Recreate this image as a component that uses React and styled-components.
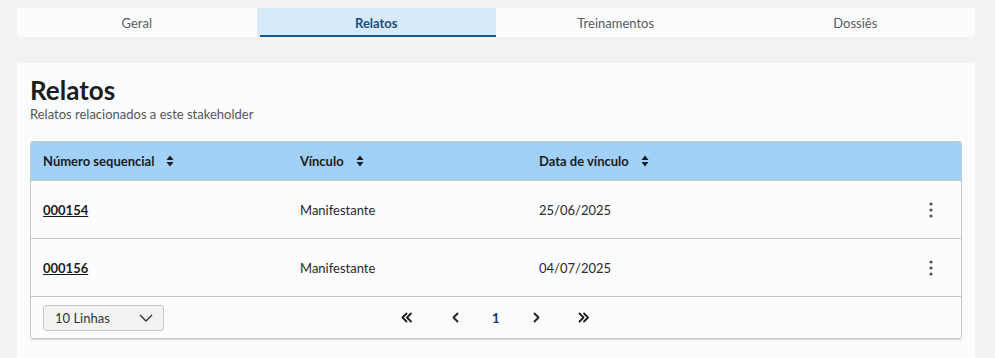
import React, { useState } from "react";
import styled, { createGlobalStyle } from "styled-components";

const relatos = [
    { numero: "000154", vinculo: "Manifestante", data: "25/06/2025" },
    { numero: "000156", vinculo: "Manifestante", data: "04/07/2025" },
];

const abas = ["Geral", "Relatos", "Treinamentos", "Dossiês"];

const SortIcon = () => (
    <svg width="8" height="12" viewBox="0 0 8 12">
        <path d="M4 0.5 L7.5 5 H0.5 Z" fill="#1c1c1c" />
        <path d="M4 11.5 L7.5 7 H0.5 Z" fill="#1c1c1c" />
    </svg>
);

const Kebab = () => (
    <svg width="4" height="16" viewBox="0 0 4 16">
        <circle cx="2" cy="2" r="1.6" fill="#555" />
        <circle cx="2" cy="8" r="1.6" fill="#555" />
        <circle cx="2" cy="14" r="1.6" fill="#555" />
    </svg>
);

const Chevron = ({ dir = "left", double }) => {
    const d = dir === "left" ? "M5.5 1.5 L1.5 5.5 L5.5 9.5" : "M1.5 1.5 L5.5 5.5 L1.5 9.5";
    const d2 = dir === "left" ? "M10 1.5 L6 5.5 L10 9.5" : "M6 1.5 L10 5.5 L6 9.5";
    return (
        <svg width={double ? 12 : 7} height="11" viewBox={double ? "0 0 12 11" : "0 0 7 11"}>
            <path d={d} fill="none" stroke="#1c1c1c" strokeWidth="1.8" strokeLinecap="round" strokeLinejoin="round" />
            {double && (
                <path d={d2} fill="none" stroke="#1c1c1c" strokeWidth="1.8" strokeLinecap="round" strokeLinejoin="round" />
            )}
        </svg>
    );
};

const App = () => {
    const [aba, setAba] = useState("Relatos");

    return (
        <>
            <Global />
            <Pagina>
                <Abas>
                    {abas.map((a) => (
                        <Aba key={a} $ativa={a === aba} onClick={() => setAba(a)}>
                            {a}
                        </Aba>
                    ))}
                </Abas>

                <Cartao>
                    <Titulo>Relatos</Titulo>
                    <Subtitulo>Relatos relacionados a este stakeholder</Subtitulo>

                    <Tabela>
                        <Cabecalho>
                            <Th>
                                Número sequencial <SortIcon />
                            </Th>
                            <Th>
                                Vínculo <SortIcon />
                            </Th>
                            <Th>
                                Data de vínculo <SortIcon />
                            </Th>
                            <Th />
                        </Cabecalho>
                        {relatos.map((r) => (
                            <Linha key={r.numero}>
                                <Numero href="#">{r.numero}</Numero>
                                <Td>{r.vinculo}</Td>
                                <Td>{r.data}</Td>
                                <Acoes>
                                    <Kebab />
                                </Acoes>
                            </Linha>
                        ))}
                        <Rodape>
                            <Seletor>
                                10 Linhas
                                <svg width="14" height="8" viewBox="0 0 14 8">
                                    <path d="M1 1 L7 7 L13 1" fill="none" stroke="#333" strokeWidth="1.4" />
                                </svg>
                            </Seletor>
                            <Paginacao>
                                <BotaoPag $largura={51}><Chevron dir="left" double /></BotaoPag>
                                <BotaoPag $largura={40}><Chevron dir="left" /></BotaoPag>
                                <PaginaAtual>1</PaginaAtual>
                                <BotaoPag $largura={45}><Chevron dir="right" /></BotaoPag>
                                <BotaoPag $largura={40}><Chevron dir="right" double /></BotaoPag>
                            </Paginacao>
                        </Rodape>
                    </Tabela>
                </Cartao>
            </Pagina>
        </>
    );
};

export default App;

const Global = createGlobalStyle`
    body {
        margin: 0;
        background: #f1f2f1;
        font-family: Lato, "Noto Sans", sans-serif;
        color: #1c1c1c;
    }
`;

const Pagina = styled.div`
    padding: 8px 20px 0 17px;
    display: flex;
    flex-direction: column;
    gap: 26px;
`;

const Abas = styled.div`
    display: grid;
    grid-template-columns: repeat(4, 1fr);
    background: #fafcfd;
    border-radius: 4px;
    height: 29px;
    overflow: hidden;
`;

const Aba = styled.div`
    position: relative;
    display: flex;
    align-items: center;
    justify-content: center;
    font-size: 13px;
    cursor: pointer;
    color: ${(p) => (p.$ativa ? "#1a4f80" : "#5a5a5a")};
    font-weight: ${(p) => (p.$ativa ? 700 : 400)};
    background: ${(p) => (p.$ativa ? "#d6eafa" : "transparent")};

    &::after {
        content: "";
        display: ${(p) => (p.$ativa ? "block" : "none")};
        position: absolute;
        left: 3px;
        right: 0;
        bottom: 0;
        height: 2px;
        background: #1a5590;
    }
`;

const Cartao = styled.div`
    background: #fafcfd;
    border-radius: 4px;
    padding: 12px 13px 20px 13px;
    min-height: 280px;
`;

const Titulo = styled.h2`
    margin: 0;
    font-size: 26px;
    font-weight: 700;
    line-height: 30px;
    color: #1c1c1c;
`;

const Subtitulo = styled.p`
    margin: 1px 0 19px;
    font-size: 13px;
    line-height: 16px;
    color: #555;
`;

const Tabela = styled.div`
    border: 1px solid #c8c8c8;
    border-radius: 3px;
    box-shadow: 0 1px 1px rgba(0, 0, 0, 0.15);
    overflow: hidden;
`;

const colunas = `
    display: grid;
    grid-template-columns: 257px 239px 1fr 48px;
    align-items: center;
    padding-left: 12px;
`;

const Cabecalho = styled.div`
    ${colunas}
    height: 38px;
    background: #a1d0f8;
    border-bottom: 1px solid #c8c8c8;
`;

const Th = styled.div`
    display: flex;
    align-items: center;
    gap: 12px;
    font-size: 13px;
    font-weight: 700;
`;

const Linha = styled.div`
    ${colunas}
    height: 57px;
    border-bottom: 1px solid #c8c8c8;
`;

const Td = styled.div`
    font-size: 13px;
    color: #2a2a2a;
`;

const Numero = styled.a`
    font-size: 13px;
    font-weight: 700;
    color: #1c1c1c;
    text-decoration: underline;
    justify-self: start;
`;

const Acoes = styled.div`
    display: flex;
    justify-content: center;
    padding-right: 12px;
`;

const Rodape = styled.div`
    display: flex;
    align-items: center;
    height: 41px;
    padding-left: 12px;
`;

const Seletor = styled.div`
    box-sizing: border-box;
    width: 121px;
    height: 26px;
    display: flex;
    align-items: center;
    justify-content: space-between;
    padding: 0 10px 0 11px;
    background: #f1f2f1;
    border: 1px solid #c8c8c8;
    border-radius: 3px;
    font-size: 13px;
    color: #333;
`;

const Paginacao = styled.div`
    display: flex;
    align-items: center;
    margin-left: 237px;
`;

const BotaoPag = styled.div`
    width: ${(p) => p.$largura}px;
    display: flex;
    justify-content: flex-start;
    cursor: pointer;
`;

const PaginaAtual = styled.div`
    width: 41px;
    font-size: 13px;
    font-weight: 700;
    color: #1a3a5a;
`;
